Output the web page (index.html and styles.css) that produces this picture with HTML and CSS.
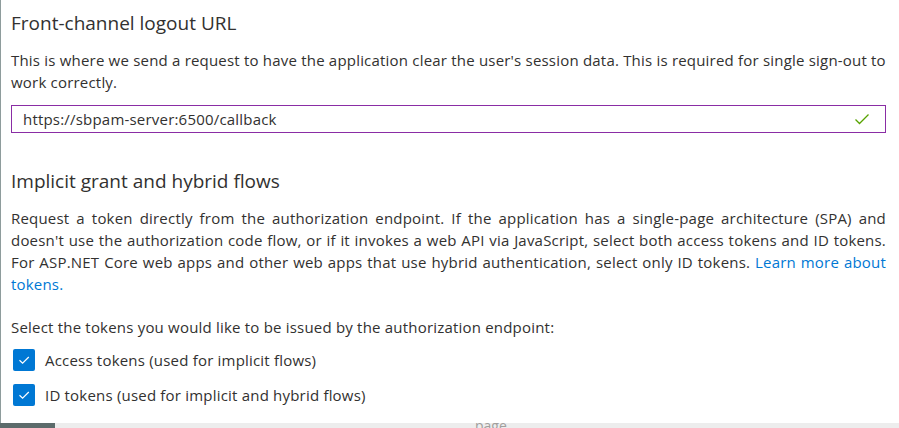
FILE: index.html
```html
<!DOCTYPE html>
<html>
<head>
<meta charset="utf-8">
<link rel="stylesheet" href="styles.css">
</head>
<body>
<div class="frame">
  <div class="content">
    <h2 class="title">Front-channel logout URL</h2>
    <p class="desc">This is where we send a request to have the application clear the user's session data. This is required for single sign-out to work correctly.</p>
    <div class="input">
      <span class="value">https://sbpam-server:6500/callback</span>
      <svg class="ok" width="16" height="16" viewBox="0 0 16 16"><path d="M1.5 8.5 L5.5 12.5 L14.5 3.5" fill="none" stroke="#57a300" stroke-width="1.3"/></svg>
    </div>
    <h2 class="title title2">Implicit grant and hybrid flows</h2>
    <p class="desc justify">Request a token directly from the authorization endpoint. If the application has a single-page architecture (SPA) and doesn't use the authorization code flow, or if it invokes a web API via JavaScript, select both access tokens and ID tokens. For ASP.NET Core web apps and other web apps that use hybrid authentication, select only ID tokens. <a class="link">Learn more about tokens.</a></p>
    <p class="desc select">Select the tokens you would like to be issued by the authorization endpoint:</p>
    <div class="check">
      <span class="box"><svg width="14" height="14" viewBox="0 0 14 14"><path d="M2.5 7.2 L5.6 10.2 L11.8 4" fill="none" stroke="#fff" stroke-width="1.2"/></svg></span>
      <span class="label">Access tokens (used for implicit flows)</span>
    </div>
    <div class="check">
      <span class="box"><svg width="14" height="14" viewBox="0 0 14 14"><path d="M2.5 7.2 L5.6 10.2 L11.8 4" fill="none" stroke="#fff" stroke-width="1.2"/></svg></span>
      <span class="label">ID tokens (used for implicit and hybrid flows)</span>
    </div>
  </div>
  <div class="footer">
    <span class="footer-dark"></span>
    <span class="footer-light"><span class="peek">page.</span></span>
  </div>
</div>
</body>
</html>
```
FILE: styles.css
```css
html, body {
  margin: 0;
  padding: 0;
  background: #fff;
}
body {
  font-family: "Open Sans", "Noto Sans", sans-serif;
  color: #323130;
  width: 899px;
  height: 428px;
  overflow: hidden;
}
.frame {
  display: flex;
  flex-direction: column;
  height: 428px;
}
.content {
  flex: 1;
  min-height: 0;
  border-left: 1px solid #8e9c9c;
  padding: 0 13px 0 10px;
  overflow: hidden;
}
.title {
  margin: 0;
  font-size: 19px;
  font-weight: 400;
  line-height: 26px;
  padding-top: 10px;
}
.title2 {
  padding-top: 0;
  margin-top: 35px;
}
.desc {
  margin: 13px 0 0;
  font-size: 15px;
  line-height: 22px;
  letter-spacing: 0.2px;
}
.justify {
  text-align: justify;
}
.link {
  color: #0078d4;
}
.select {
  margin-top: 21px;
}
.input {
  margin-top: 12px;
  height: 26px;
  border: 1px solid #8a2da5;
  display: flex;
  align-items: center;
  justify-content: space-between;
  padding: 0 15px 0 11px;
  font-size: 15px;
  letter-spacing: 0.2px;
}
.ok {
  display: block;
}
.check {
  display: flex;
  align-items: center;
  gap: 10px;
  margin-top: 11px;
  font-size: 15px;
  letter-spacing: 0.2px;
  padding-left: 2px;
}
.check + .check {
  margin-top: 13px;
}
.box {
  width: 22px;
  height: 22px;
  border-radius: 2px;
  background: #0078d4;
  display: flex;
  align-items: center;
  justify-content: center;
}
.box svg {
  display: block;
}
.footer {
  flex: none;
  height: 5px;
  display: flex;
}
.footer-dark {
  width: 55px;
  background: #5c6b6b;
}
.footer-light {
  flex: 1;
  background: #ededed;
  position: relative;
  overflow: hidden;
}
.peek {
  position: absolute;
  left: 420px;
  top: -7px;
  font-size: 14px;
  line-height: 19px;
  color: #a19f9d;
}
```
